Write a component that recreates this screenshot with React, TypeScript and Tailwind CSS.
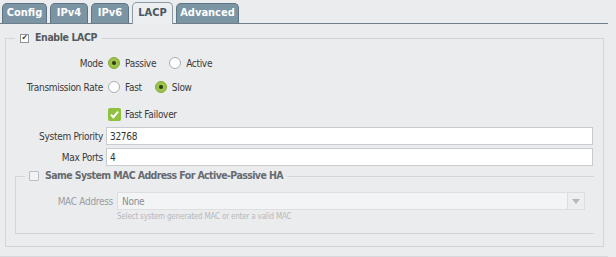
import React from 'react';

const font = { fontFamily: 'Tahoma, "DejaVu Sans Condensed", "DejaVu Sans", sans-serif' };

const Radio: React.FC<{ checked?: boolean }> = ({ checked }) =>
  checked ? (
    <span className="block w-[12px] h-[12px] rounded-full bg-[#9cc24a] border border-[#86aa3c] flex items-center justify-center">
      <span className="block w-[4px] h-[4px] rounded-full bg-[#2f3b17]" />
    </span>
  ) : (
    <span className="block w-[12px] h-[12px] rounded-full bg-white border border-[#a9adb2]" />
  );

const Tab: React.FC<{ label: string; active?: boolean; w: string }> = ({ label, active, w }) =>
  active ? (
    <div className={`${w} h-[22px] -mb-px rounded-t-[5px] border border-b-0 border-[#8c9aa4] bg-[#eceef0] text-[#4a5660] flex items-center justify-center text-[11px] font-bold`}>
      {label}
    </div>
  ) : (
    <div className={`${w} h-[20px] rounded-t-[5px] border border-b-0 border-[#5f7583] bg-[#7b95a5] text-white flex items-center justify-center text-[11px] font-bold`}>
      {label}
    </div>
  );

export default function App() {
  return (
    <div className="w-[616px] h-[257px] bg-[#ebecee] overflow-hidden text-[10px] tracking-[-0.3px] text-[#3a3a3a]" style={font}>
      {/* Tabs */}
      <div className="h-[23px] flex items-end gap-[3px] pl-[2px] tracking-normal">
        <Tab label="Config" w="w-[45px]" />
        <Tab label="IPv4" w="w-[38px]" />
        <Tab label="IPv6" w="w-[38px]" />
        <Tab label="LACP" w="w-[41px]" active />
        <Tab label="Advanced" w="w-[63px]" />
      </div>

      {/* Panel */}
      <div className="w-[608px] h-[234px] border-t border-[#6e7e89] border-b border-b-[#d6d8db] pt-[7px]">
        <fieldset className="ml-[5px] w-[599px] h-[216px] border border-[#d3d5d8]">
          <legend className="ml-[9px] px-[5px] flex items-center gap-[6px] h-[14px]">
            <span className="w-[9px] h-[9px] bg-white border border-[#8f9499] flex items-center justify-center text-[#333] text-[8px] leading-none">
              ✔
            </span>
            <span className="font-bold text-[10.5px] tracking-[-0.4px] text-[#555a5f]">Enable LACP</span>
          </legend>

          <div className="flex flex-col pt-[9px]">
            <div className="flex items-center h-[18px]">
              <span className="w-[97px] text-right">Mode</span>
              <span className="ml-[5px] flex items-center">
                <Radio checked />
                <span className="ml-[5px]">Passive</span>
                <span className="ml-[13px]"><Radio /></span>
                <span className="ml-[5px]">Active</span>
              </span>
            </div>
            <div className="flex items-center h-[18px] mt-[6px]">
              <span className="w-[97px] text-right">Transmission Rate</span>
              <span className="ml-[5px] flex items-center">
                <Radio />
                <span className="ml-[5px]">Fast</span>
                <span className="ml-[13px]"><Radio checked /></span>
                <span className="ml-[5px]">Slow</span>
              </span>
            </div>
            <div className="flex items-center h-[18px] mt-[9px]">
              <span className="w-[97px]" />
              <span className="ml-[5px] w-[13px] h-[13px] bg-[#8fc040] rounded-[2px] flex items-center justify-center">
                <svg width="11" height="11" viewBox="0 0 11 11">
                  <path d="M2 5.8 L4.4 8.2 L9 2.6" fill="none" stroke="white" strokeWidth="2" />
                </svg>
              </span>
              <span className="ml-[4px]">Fast Failover</span>
            </div>
            <div className="flex items-center h-[18px] mt-[4px]">
              <span className="w-[97px] text-right">System Priority</span>
              <div className="ml-[3px] w-[487px] h-[18px] bg-white border border-[#c9cbce] flex items-center px-[3px] text-[#333]">
                32768
              </div>
            </div>
            <div className="flex items-center h-[18px] mt-[3px]">
              <span className="w-[97px] text-right">Max Ports</span>
              <div className="ml-[3px] w-[487px] h-[18px] bg-white border border-[#c9cbce] flex items-center px-[3px] text-[#333]">
                4
              </div>
            </div>

            <fieldset className="ml-[9px] mt-[3px] w-[579px] h-[65px] border border-r-0 border-[#d3d5d8]">
              <legend className="ml-[9px] px-[4px] flex items-center gap-[6px] h-[14px]">
                <span className="w-[10px] h-[10px] bg-[#f2f3f4] border border-[#b9bdc1] rounded-[1px]" />
                <span className="font-bold text-[10.5px] tracking-[-0.6px] text-[#666b70]">
                  Same System MAC Address For Active-Passive HA
                </span>
              </legend>
              <div className="flex items-center mt-[9px]">
                <span className="w-[97px] text-right text-[#9a9da1]">MAC Address</span>
                <div className="ml-[4px] w-[468px] h-[18px] bg-[#f3f4f5] border border-[#dcdee0] flex items-center">
                  <span className="flex-1 px-[4px] text-[#8a8d91]">None</span>
                  <span className="w-[17px] h-[16px] border-l border-[#dcdee0] bg-[#eceef0] flex items-center justify-center">
                    <svg width="8" height="5" viewBox="0 0 8 5">
                      <path d="M0 0 L8 0 L4 5 Z" fill="#b4b7bb" />
                    </svg>
                  </span>
                </div>
              </div>
              <div className="ml-[101px] mt-[1px] text-[8px] tracking-[-0.2px] text-[#b5b8bc]">
                Select system generated MAC or enter a valid MAC
              </div>
            </fieldset>
          </div>
        </fieldset>
      </div>
    </div>
  );
}
